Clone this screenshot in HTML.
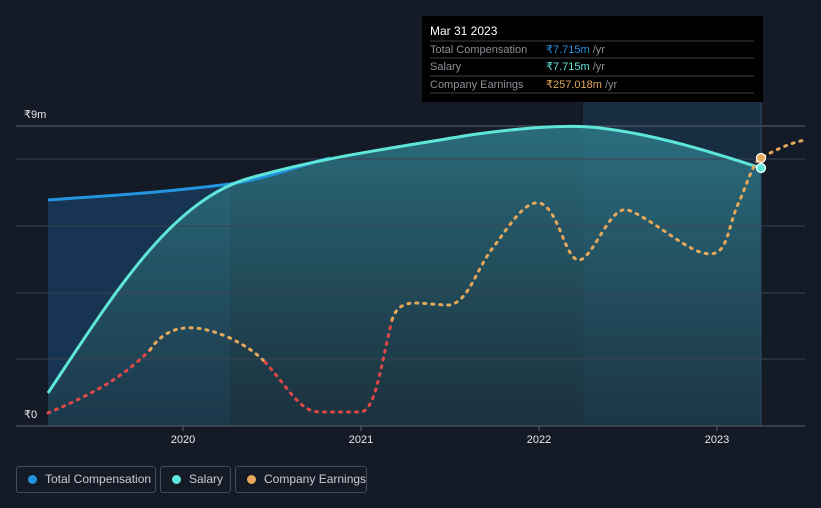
<!DOCTYPE html><html><head><style>body{margin:0;background:#151b26;font-family:"Liberation Sans",sans-serif}
.lg{position:absolute;top:466px;height:27px;border:1px solid #444b57;border-radius:3px;color:#c8ccd2;font-size:12px;line-height:25px;box-sizing:border-box;padding-left:28px;white-space:nowrap}
.lg i{position:absolute;left:11px;top:8px;width:9px;height:9px;border-radius:50%}
</style></head><body><div style="position:relative;width:821px;height:508px;overflow:hidden">
<svg width="821" height="508" style="position:absolute;left:0;top:0">
<defs><linearGradient id="g" x1="0" y1="0" x2="0" y2="1"><stop offset="0" stop-color="#2e7a8a" stop-opacity=".85"/><stop offset="1" stop-color="#1e3a48" stop-opacity=".7"/></linearGradient></defs>
<rect x="583" y="100" width="178" height="326" fill="#1a3a55" opacity=".6"/>
<path d="M48 200 C100 196 150 194 230 184 L230 426 L48 426Z" fill="#173552"/>
<path d="M48 393 C110 300 170 200 250 178 C320 158 380 150 470 135 C520 128 570 124 600 128 C660 135 720 155 761 168 L761 426 L48 426Z" fill="url(#g)"/>
<g stroke="#3a4250" stroke-width="1"><line x1="16" y1="159" x2="805" y2="159"/><line x1="16" y1="226" x2="805" y2="226"/><line x1="16" y1="293" x2="805" y2="293"/><line x1="16" y1="359" x2="805" y2="359"/></g>
<line x1="16" y1="126" x2="805" y2="126" stroke="#5a606a"/>
<line x1="16" y1="426" x2="805" y2="426" stroke="#5a606a"/>
<g stroke="#5a606a"><line x1="183" y1="426" x2="183" y2="431"/><line x1="361" y1="426" x2="361" y2="431"/><line x1="539" y1="426" x2="539" y2="431"/><line x1="717" y1="426" x2="717" y2="431"/></g>
<line x1="761" y1="100" x2="761" y2="426" stroke="#2a4a66"/>
<path d="M48 200 C100 196 150 194 230 184 C270 178 300 165 330 158" fill="none" stroke="#2394df" stroke-width="3"/>
<path d="M48 393 C110 300 170 200 250 178 C320 158 380 150 470 135 C520 128 570 124 600 128 C660 135 720 155 761 168" fill="none" stroke="#5ee6d8" stroke-width="3"/>
<path d="M48 413 C90 395 120 380 150 350" fill="none" stroke="#e04848" stroke-width="3" stroke-dasharray="2 6" stroke-linecap="round"/>
<path d="M150 350 C170 320 200 325 230 338 C250 348 258 355 265 362" fill="none" stroke="#e6a95c" stroke-width="3" stroke-dasharray="2 6" stroke-linecap="round"/>
<path d="M265 362 C290 390 300 412 320 412 L360 412 C375 412 380 370 392 320" fill="none" stroke="#e04848" stroke-width="3" stroke-dasharray="2 6" stroke-linecap="round"/>
<path d="M392 320 C400 295 420 305 450 305 C470 300 475 270 495 245 C510 225 525 200 540 203 C560 210 565 262 580 260 C595 255 610 205 628 210 C650 218 680 245 700 252 C730 262 725 230 740 200 C750 175 755 160 761 158 C775 150 790 143 805 140" fill="none" stroke="#e6a95c" stroke-width="3" stroke-dasharray="2 6" stroke-linecap="round"/>
<circle cx="761" cy="158" r="4.5" fill="#e6a95c" stroke="#fff" stroke-width="1.2"/>
<circle cx="761" cy="168" r="4.5" fill="#5ee6d8" stroke="#fff" stroke-width="1.2"/>
<g fill="#e6e8eb" font-size="11"><text x="24" y="118">₹9m</text><text x="24" y="418">₹0</text>
<text x="183" y="443" text-anchor="middle">2020</text><text x="361" y="443" text-anchor="middle">2021</text><text x="539" y="443" text-anchor="middle">2022</text><text x="717" y="443" text-anchor="middle">2023</text></g>
<rect x="422" y="16" width="341" height="86" fill="#000"/>
<text x="430" y="35" fill="#fff" font-size="12">Mar 31 2023</text>
<g stroke="#3c3f45"><line x1="430" y1="41" x2="754" y2="41"/><line x1="430" y1="58" x2="754" y2="58"/><line x1="430" y1="76" x2="754" y2="76"/><line x1="430" y1="93" x2="754" y2="93"/></g>
<g font-size="11" fill="#8b9097"><text x="430" y="53">Total Compensation</text><text x="430" y="70">Salary</text><text x="430" y="88">Company Earnings</text></g>
<text x="546" y="53" font-size="11" fill="#2394df">₹7.715m <tspan fill="#8b9097">/yr</tspan></text>
<text x="546" y="70" font-size="11" fill="#5ee6d8">₹7.715m <tspan fill="#8b9097">/yr</tspan></text>
<text x="546" y="88" font-size="11" fill="#e6a95c">₹257.018m <tspan fill="#8b9097">/yr</tspan></text>
</svg>
<div class="lg" style="left:16px;width:140px"><i style="background:#2394df"></i>Total Compensation</div>
<div class="lg" style="left:160px;width:71px"><i style="background:#5ee6d8"></i>Salary</div>
<div class="lg" style="left:235px;width:132px"><i style="background:#e6a95c"></i>Company Earnings</div>
</div></body></html>
